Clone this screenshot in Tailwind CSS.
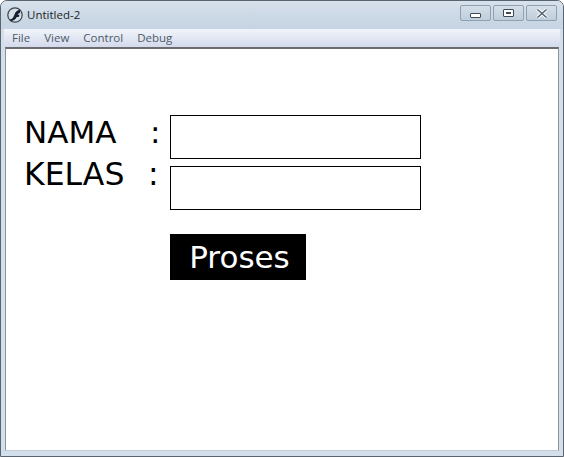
<!DOCTYPE html>
<html lang="id">
  <head>
    <meta charset="UTF-8" />
    <title>Untitled-2</title>
    <script src="https://cdn.jsdelivr.net/npm/@tailwindcss/browser@4"></script>
  </head>
  <body class="w-[564px] h-[457px] overflow-hidden bg-white">
    <div class="w-[564px] h-[457px] flex flex-col rounded-t-[7px] border border-[#5a6470] bg-[#d3dfeb] overflow-hidden font-['Open_Sans','Noto_Sans',sans-serif]">
      <!-- title bar -->
      <header class="h-[28px] shrink-0 flex items-center pl-[6px] pr-[6px] bg-gradient-to-b from-[#d8e2ec] via-[#ccd9e6] to-[#c6d4e3]">
        <svg class="w-[16px] h-[16px] shrink-0" viewBox="0 0 16 16">
          <circle cx="8" cy="8" r="7.2" fill="#d5dde5" stroke="#39424e" stroke-width="1.2" />
          <path d="M3 12.5C6 12 6.7 9.5 7.7 7C8.5 5 10 3.2 13 2.8L13 6C11.5 6.3 11 7 10.7 7.8L12.5 7.8L11.7 10L9.8 10C8.5 12.5 6.5 14 3 14.2Z" fill="#16202e" />
        </svg>
        <span class="ml-[4px] text-[11.5px] text-[#1e1e1e]">Untitled-2</span>
        <div class="ml-auto flex gap-[2px] mt-[-4px]">
          <button class="w-[31px] h-[16px] flex items-center justify-center rounded-[2px] border border-[#8fa0b1] bg-gradient-to-b from-[#d5dfe9] to-[#bfcddb]">
            <span class="block w-[11px] h-[5px] mt-[5px] rounded-[1px] border border-[#3f4a56] bg-white"></span>
          </button>
          <button class="w-[31px] h-[16px] flex items-center justify-center rounded-[2px] border border-[#8fa0b1] bg-gradient-to-b from-[#d5dfe9] to-[#bfcddb]">
            <span class="flex items-center justify-center w-[11px] h-[8px] rounded-[1px] border border-[#3f4a56] bg-white">
              <span class="block w-[5px] h-[2px] bg-[#3f4a56]"></span>
            </span>
          </button>
          <button class="w-[31px] h-[16px] flex items-center justify-center rounded-[2px] border border-[#8fa0b1] bg-gradient-to-b from-[#d5dfe9] to-[#bfcddb]">
            <svg class="w-[14px] h-[11px]" viewBox="0 0 14 11">
              <path d="M2.5 1.5L11.5 9.5M11.5 1.5L2.5 9.5" stroke="#fff" stroke-width="3.6" />
              <path d="M2.5 1.5L11.5 9.5M11.5 1.5L2.5 9.5" stroke="#59636f" stroke-width="1.6" />
            </svg>
          </button>
        </div>
      </header>

      <!-- menu bar -->
      <nav class="h-[18px] shrink-0 flex items-center gap-[14px] pl-[8px] mx-[3px] text-[11.5px] text-[#4d5a66] bg-gradient-to-b from-[#f0f4fa] to-[#d3daec]">
        <span>File</span>
        <span>View</span>
        <span>Control</span>
        <span>Debug</span>
      </nav>

      <!-- stage -->
      <div class="flex-1 flex flex-col px-[4px] pb-[5px]">
        <main class="flex-1 border-t-2 border-x border-b border-t-[#6b6b70] border-x-[#8d949c] border-b-[#c4ccd6] bg-white pt-[66px] pl-[18px] text-black font-['DejaVu_Sans',sans-serif]">
          <div class="flex items-start h-[44px]">
            <label class="w-[126px] text-[31px] leading-[36px] mt-[-1px]">NAMA</label>
            <span class="w-[20px] text-[31px] leading-[36px] mt-[-1px]">:</span>
            <input class="w-[251px] h-[44px] border border-black bg-white" />
          </div>
          <div class="flex items-start h-[44px] mt-[7px]">
            <label class="w-[124px] text-[31.5px] leading-[36px] mt-[-10px]">KELAS</label>
            <span class="w-[22px] text-[31.5px] leading-[36px] mt-[-10px]">:</span>
            <input class="w-[251px] h-[44px] border border-black bg-white" />
          </div>
          <button class="block w-[136px] h-[46px] mt-[24px] ml-[146px] pl-[3px] bg-black text-white text-[31px] leading-[44px] text-center">Proses</button>
        </main>
      </div>
    </div>
  </body>
</html>
